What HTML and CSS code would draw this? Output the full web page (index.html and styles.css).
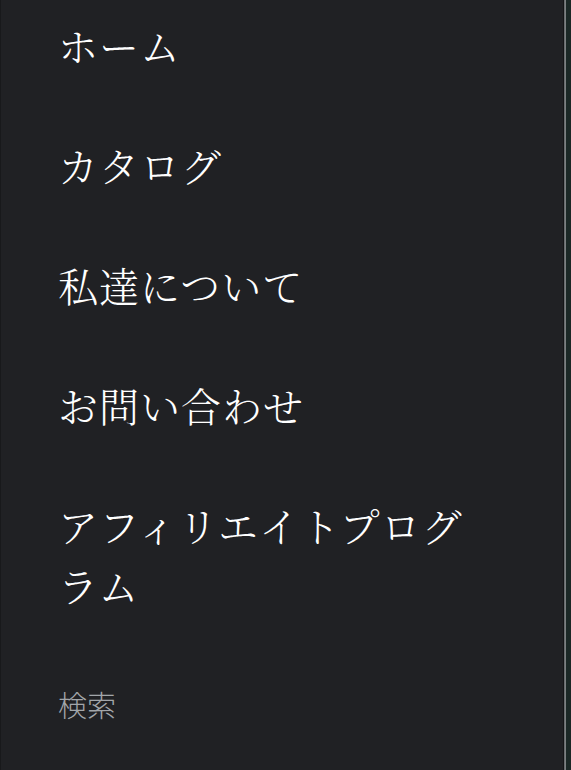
FILE: index.html
```html
<!DOCTYPE html>
<html lang="ja">
<head>
<meta charset="utf-8">
<title>メニュー</title>
<link rel="stylesheet" href="styles.css">
</head>
<body>
<div class="layout">
  <aside class="drawer">
    <nav class="menu">
      <a class="menu-item" href="#">ホーム</a>
      <a class="menu-item" href="#">カタログ</a>
      <a class="menu-item" href="#">私達について</a>
      <a class="menu-item" href="#">お問い合わせ</a>
      <a class="menu-item" href="#">アフィリエイトプログラム</a>
    </nav>
    <form class="search">
      <input class="search-input" type="text" placeholder="検索">
    </form>
  </aside>
  <div class="edge"></div>
</div>
</body>
</html>
```

FILE: styles.css
```css
html, body {
  margin: 0;
  padding: 0;
  height: 100%;
  background: #1b2826;
  overflow: hidden;
}
.layout {
  display: flex;
  height: 770px;
}
.drawer {
  width: 562px;
  flex: none;
  background: #202124;
  border-left: 1px solid #18191b;
  border-right: 1px solid #141517;
  box-sizing: content-box;
  display: flex;
  flex-direction: column;
}
.edge {
  width: 2px;
  flex: none;
  background: linear-gradient(to right, #5f6365, #85898b);
}
.menu {
  display: flex;
  flex-direction: column;
  gap: 60px;
  padding: 15px 90px 0 57px;
}
.menu-item {
  font-family: "Noto Serif CJK JP", "Noto Sans CJK JP", serif;
  font-size: 40px;
  font-weight: 300;
  line-height: 60px;
  color: #ffffff;
  text-decoration: none;
  letter-spacing: 1px;
}
.search {
  padding: 69px 0 0 57px;
}
.search-input {
  font-family: "Noto Sans CJK JP", sans-serif;
  font-size: 29px;
  line-height: 40px;
  background: transparent;
  border: none;
  outline: none;
  color: #9aa0a6;
  padding: 0;
  width: 400px;
}
.search-input::placeholder {
  color: #a2a6aa;
  font-weight: 300;
}
```
